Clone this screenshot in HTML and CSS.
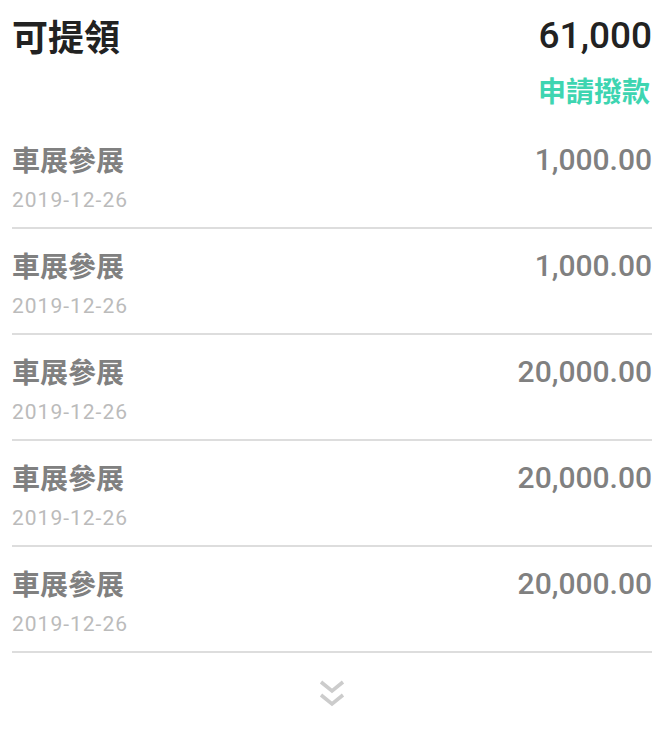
FILE: index.html
```html
<!DOCTYPE html>
<html lang="zh-Hant">
<head>
<meta charset="utf-8">
<title>可提領</title>
<link rel="stylesheet" href="styles.css">
</head>
<body>
<div class="page">
  <div class="header">
    <div class="header-row">
      <span class="header-title">可提領</span>
      <span class="header-amount">61,000</span>
    </div>
    <div class="apply-row">
      <a class="apply">申請撥款</a>
    </div>
  </div>
  <ul class="list">
    <li class="item">
      <div class="item-main">
        <span class="item-title">車展參展</span>
        <span class="item-amount">1,000.00</span>
      </div>
      <div class="item-date">2019-12-26</div>
    </li>
    <li class="item">
      <div class="item-main">
        <span class="item-title">車展參展</span>
        <span class="item-amount">1,000.00</span>
      </div>
      <div class="item-date">2019-12-26</div>
    </li>
    <li class="item">
      <div class="item-main">
        <span class="item-title">車展參展</span>
        <span class="item-amount">20,000.00</span>
      </div>
      <div class="item-date">2019-12-26</div>
    </li>
    <li class="item">
      <div class="item-main">
        <span class="item-title">車展參展</span>
        <span class="item-amount">20,000.00</span>
      </div>
      <div class="item-date">2019-12-26</div>
    </li>
    <li class="item">
      <div class="item-main">
        <span class="item-title">車展參展</span>
        <span class="item-amount">20,000.00</span>
      </div>
      <div class="item-date">2019-12-26</div>
    </li>
  </ul>
  <div class="more">
    <svg class="more-icon" width="26" height="30" viewBox="0 0 26 30" fill="none" stroke="#cccccc" stroke-width="3.6" stroke-linecap="butt" stroke-linejoin="miter">
      <polyline points="2,3 13,12 24,3"/>
      <polyline points="2,16 13,25 24,16"/>
    </svg>
  </div>
</div>
</body>
</html>
```
FILE: styles.css
```css
html, body {
  margin: 0;
  padding: 0;
  background: #ffffff;
}
body {
  font-family: Roboto, "Noto Sans CJK TC", sans-serif;
}
.page {
  padding: 0 20px 0 12px;
}
.header {
  display: flex;
  flex-direction: column;
  padding-top: 12px;
}
.header-row {
  display: flex;
  justify-content: space-between;
  align-items: center;
  height: 46px;
}
.header-title {
  font-family: "Noto Sans CJK TC", sans-serif;
  font-size: 36px;
  font-weight: 700;
  color: #222222;
}
.header-amount {
  font-size: 37px;
  font-weight: 500;
  color: #222222;
}
.apply-row {
  display: flex;
  justify-content: flex-end;
  margin-top: 12px;
}
.apply {
  font-family: "Noto Sans CJK TC", sans-serif;
  font-size: 28px;
  font-weight: 700;
  color: #3ed5b1;
  line-height: 40px;
  margin-right: 2px;
}
.list {
  list-style: none;
  margin: 13px 0 0 0;
  padding: 0;
}
.item {
  display: flex;
  flex-direction: column;
  height: 104px;
  border-bottom: 2px solid #dddddd;
  box-sizing: content-box;
}
.item-main {
  display: flex;
  justify-content: space-between;
  align-items: center;
  height: 40px;
  margin-top: 16px;
}
.item-title {
  font-family: "Noto Sans CJK TC", sans-serif;
  font-size: 28px;
  font-weight: 700;
  color: #808080;
}
.item-amount {
  font-size: 30px;
  font-weight: 500;
  color: #808080;
}
.item-date {
  font-size: 21px;
  letter-spacing: 1px;
  color: #bbbbbb;
  margin-top: 6px;
  line-height: 30px;
}
.more {
  display: flex;
  justify-content: center;
  padding-top: 26px;
}
.more-icon {
  display: block;
}
```
